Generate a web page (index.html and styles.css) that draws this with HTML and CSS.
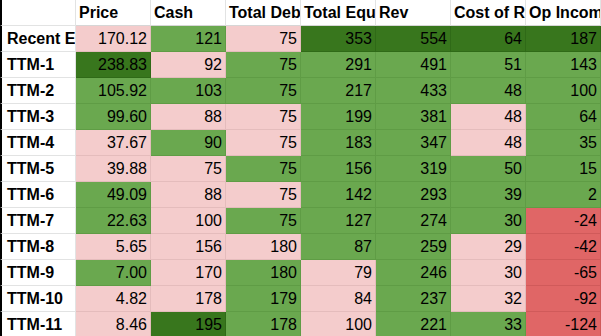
FILE: index.html
```html
<!DOCTYPE html>
<html>
<head>
<meta charset="utf-8">
<link rel="stylesheet" href="styles.css">
</head>
<body>
<div class="sheet">
  <div class="c lab"></div>
  <div class="c hd">Price</div>
  <div class="c hd">Cash</div>
  <div class="c hd">Total Debt</div>
  <div class="c hd">Total Equity</div>
  <div class="c hd">Rev</div>
  <div class="c hd">Cost of Revenue</div>
  <div class="c hd">Op Income</div>

  <div class="c lab">Recent Earnings</div>
  <div class="c n p">170.12</div><div class="c n g">121</div><div class="c n p">75</div><div class="c n d">353</div><div class="c n d">554</div><div class="c n d">64</div><div class="c n d">187</div>

  <div class="c lab">TTM-1</div>
  <div class="c n d">238.83</div><div class="c n p">92</div><div class="c n g">75</div><div class="c n g">291</div><div class="c n g">491</div><div class="c n g">51</div><div class="c n g">143</div>

  <div class="c lab">TTM-2</div>
  <div class="c n g">105.92</div><div class="c n g">103</div><div class="c n g">75</div><div class="c n g">217</div><div class="c n g">433</div><div class="c n g">48</div><div class="c n g">100</div>

  <div class="c lab">TTM-3</div>
  <div class="c n g">99.60</div><div class="c n p">88</div><div class="c n p">75</div><div class="c n g">199</div><div class="c n g">381</div><div class="c n p">48</div><div class="c n g">64</div>

  <div class="c lab">TTM-4</div>
  <div class="c n p">37.67</div><div class="c n g">90</div><div class="c n p">75</div><div class="c n g">183</div><div class="c n g">347</div><div class="c n p">48</div><div class="c n g">35</div>

  <div class="c lab">TTM-5</div>
  <div class="c n p">39.88</div><div class="c n p">75</div><div class="c n g">75</div><div class="c n g">156</div><div class="c n g">319</div><div class="c n g">50</div><div class="c n g">15</div>

  <div class="c lab">TTM-6</div>
  <div class="c n g">49.09</div><div class="c n p">88</div><div class="c n p">75</div><div class="c n g">142</div><div class="c n g">293</div><div class="c n g">39</div><div class="c n g">2</div>

  <div class="c lab">TTM-7</div>
  <div class="c n g">22.63</div><div class="c n p">100</div><div class="c n g">75</div><div class="c n g">127</div><div class="c n g">274</div><div class="c n g">30</div><div class="c n r">-24</div>

  <div class="c lab">TTM-8</div>
  <div class="c n p">5.65</div><div class="c n p">156</div><div class="c n p">180</div><div class="c n g">87</div><div class="c n g">259</div><div class="c n p">29</div><div class="c n r">-42</div>

  <div class="c lab">TTM-9</div>
  <div class="c n g">7.00</div><div class="c n p">170</div><div class="c n g">180</div><div class="c n p">79</div><div class="c n g">246</div><div class="c n p">30</div><div class="c n r">-65</div>

  <div class="c lab">TTM-10</div>
  <div class="c n p">4.82</div><div class="c n p">178</div><div class="c n g">179</div><div class="c n p">84</div><div class="c n g">237</div><div class="c n p">32</div><div class="c n r">-92</div>

  <div class="c lab">TTM-11</div>
  <div class="c n p">8.46</div><div class="c n d">195</div><div class="c n g">178</div><div class="c n p">100</div><div class="c n g">221</div><div class="c n g">33</div><div class="c n r">-124</div>
</div>
</body>
</html>
```

FILE: styles.css
```css
html, body {
  margin: 0;
  padding: 0;
  background: #ffffff;
}

body {
  width: 601px;
  height: 336px;
  overflow: hidden;
  font-family: "Liberation Sans", Arial, sans-serif;
  font-size: 16px;
  color: #000000;
}

.sheet {
  display: grid;
  grid-template-columns: 76px repeat(7, 75px);
  grid-template-rows: repeat(13, 26px);
}

.c {
  box-sizing: border-box;
  border-right: 1px solid #e2e3e3;
  border-bottom: 1px solid #e2e3e3;
  padding: 4px 3px 0 3px;
  line-height: 18px;
  white-space: nowrap;
  overflow: hidden;
  background: #ffffff;
}

.hd {
  font-weight: bold;
  text-align: left;
  border-bottom-color: #d6d6d6;
}

.lab {
  font-weight: bold;
  border-left: 2px solid #000000;
  padding-left: 5px;
}

.n {
  text-align: right;
}

.p {
  background: #f4cccc;
  border-color: #e4bcbc;
}

.g {
  background: #6aa84f;
  border-color: #5f9c45;
}

.d {
  background: #38761d;
  border-color: #2f6a17;
}

.r {
  background: #e06666;
  border-color: #d05a5a;
}
```
